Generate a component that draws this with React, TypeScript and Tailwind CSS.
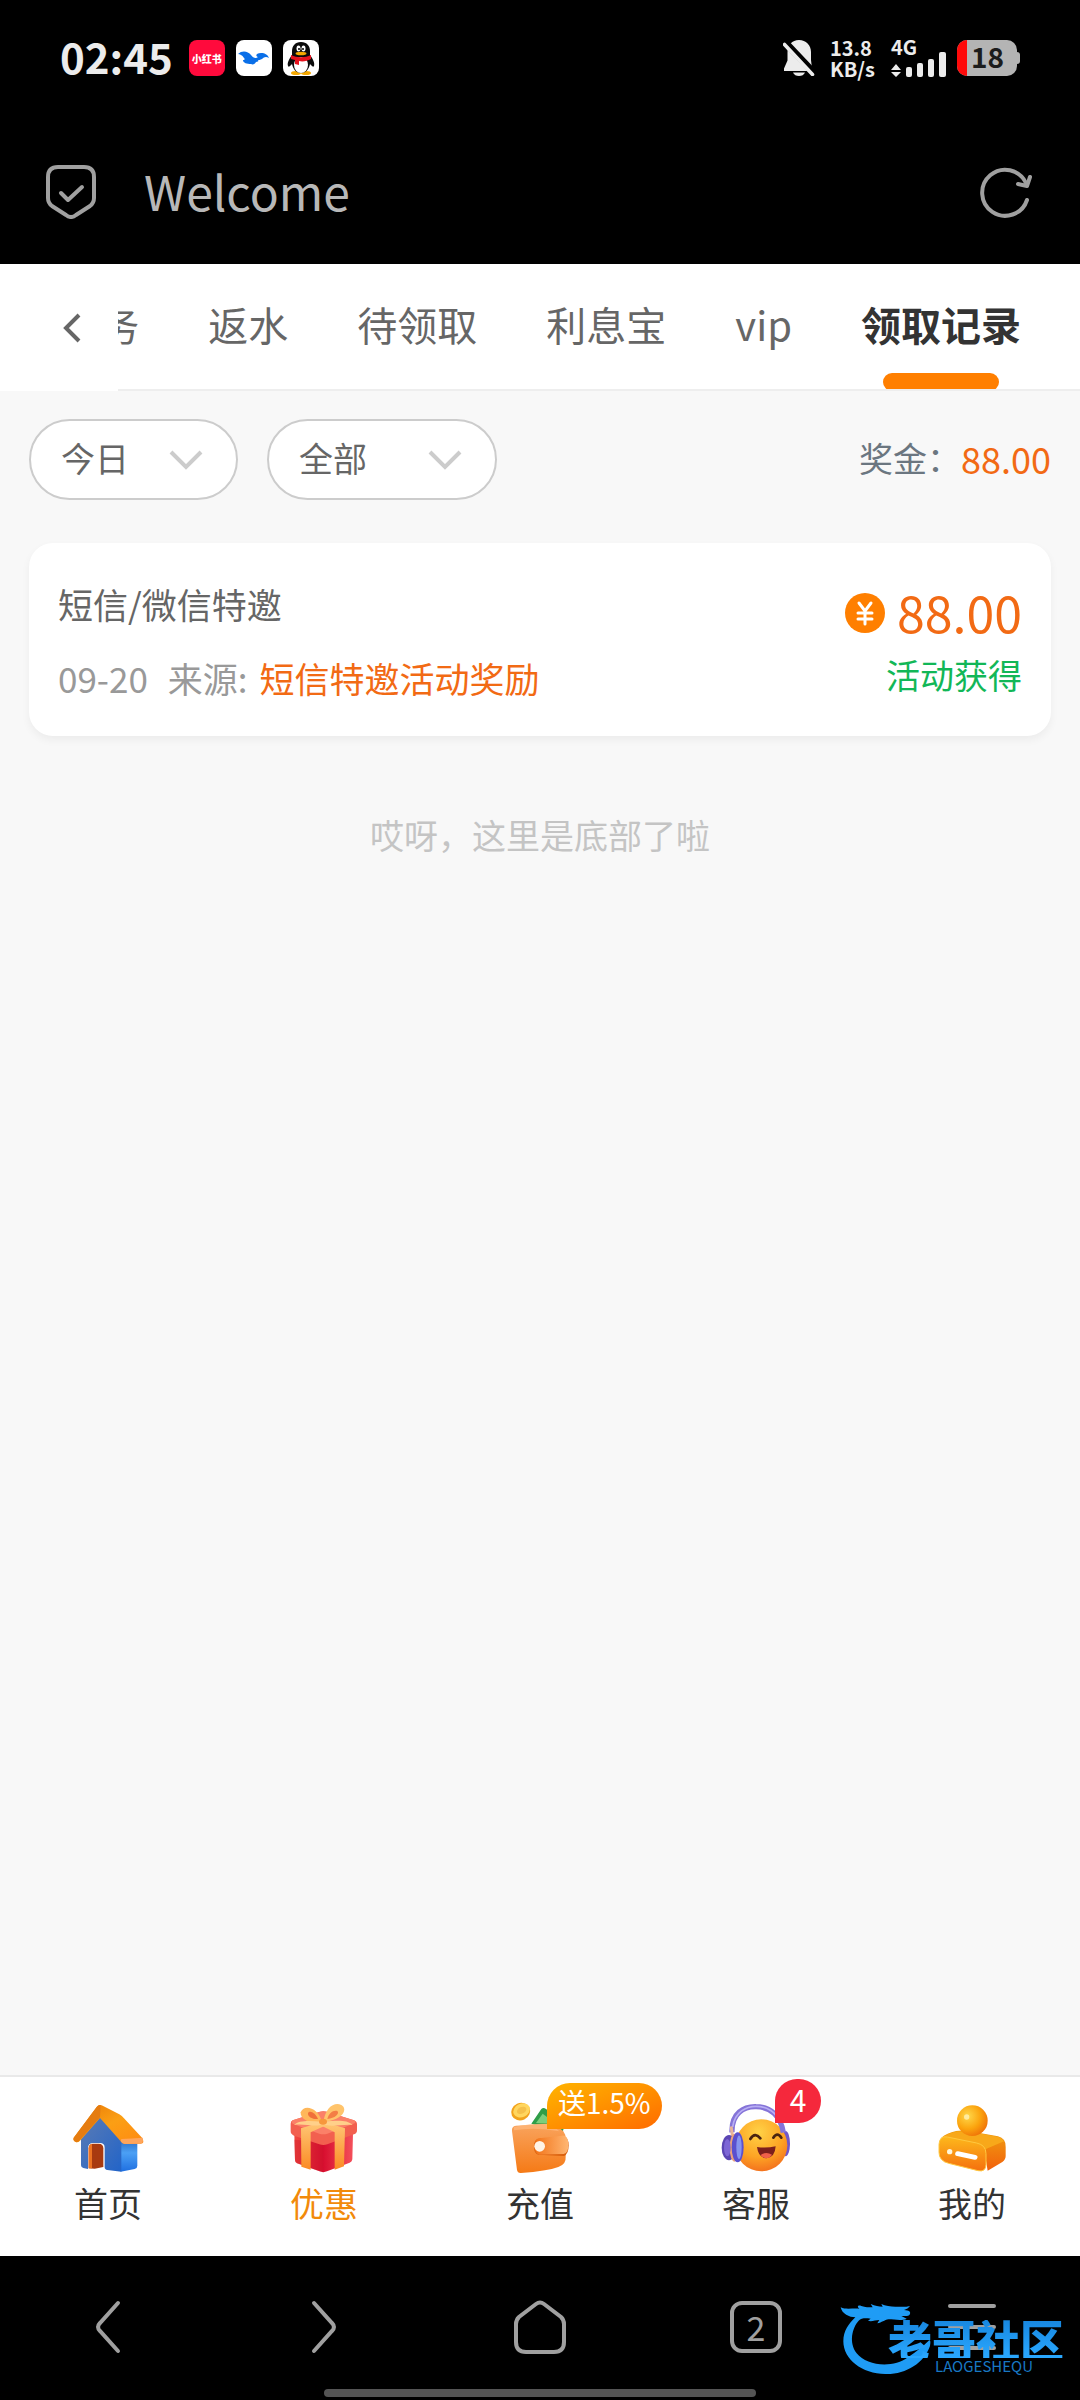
import { useState } from "react";

const tabs = ["任务", "返水", "待领取", "利息宝", "vip", "领取记录"];

// status bar icons
function BellOffIcon() {
  return (
    <svg width="32" height="36" viewBox="0 0 32 36" fill="#ececec" aria-hidden="true">
      <path d="M16 0C9 0 4.500 5 4.500 12v8.500L1 28.500V31h28v-2.500L28 20v-8C28 5 23 0 16 0z" />
      <path d="M10 32.500h12c-1 2.400-3.300 3.500-6 3.500s-5-1.100-6-3.500z" />
      <path d="M0 0 L34 36" stroke="#000" strokeWidth="7" />
      <path d="M1.500 4.500 L29.500 34.500" stroke="#ececec" strokeWidth="3.600" strokeLinecap="round" />
    </svg>
  );
}

function SignalIcon() {
  return (
    <svg width="56" height="26" viewBox="0 0 56 26" fill="#ececec" aria-hidden="true">
      <path d="M5 13l5 6H0zM5 26l-5-5h10z" />
      <rect x="15" y="16" width="6" height="10" rx="2" />
      <rect x="26" y="12" width="6" height="14" rx="2" />
      <rect x="37" y="8" width="6" height="18" rx="2" />
      <rect x="48" y="1" width="7" height="25" rx="2" />
    </svg>
  );
}

function WaveAppIcon() {
  return (
    <svg width="36" height="36" viewBox="0 0 36 36" aria-hidden="true">
      <rect width="36" height="36" rx="8" fill="#fff" />
      <path
        d="M2 14c4-4 10-3 13 1 2 3 5 4 7 2-3-1-2-4 3-4 4 0 7 2 8 5-3-2-5-1-7 1-2 1-3 1-4 1 1 1 0 2-2 2-1 2-3 3-5 2-4 0-8-1-8-4 2 0 2-1 1-2-2-3-4-4-6-4z"
        fill="#0a6fe8"
      />
    </svg>
  );
}

function PenguinAppIcon() {
  return (
    <svg width="36" height="36" viewBox="0 0 36 36" aria-hidden="true">
      <rect width="36" height="36" rx="8" fill="#fff" />
      <ellipse cx="13" cy="33" rx="5" ry="2" fill="#f5a800" />
      <ellipse cx="23" cy="33" rx="5" ry="2" fill="#f5a800" />
      <path d="M18 2c-6 0-9 4-9 9v4c-3 4-5 8-4 11 1 2 3-1 4-2 1 5 4 9 9 9s8-4 9-9c1 1 3 4 4 2 1-3-1-7-4-11v-4c0-5-3-9-9-9z" fill="#0b0b0b" />
      <ellipse cx="18" cy="25" rx="7" ry="8" fill="#fff" />
      <path d="M8 15c6 3 14 3 20 0v4c-4 2-8 3-12 2v4l-4-1v-4l-4-1z" fill="#e5121e" />
      <ellipse cx="15.500" cy="8.500" rx="2" ry="3" fill="#fff" />
      <ellipse cx="20.500" cy="8.500" rx="2" ry="3" fill="#fff" />
      <circle cx="16" cy="9" r="1" />
      <circle cx="20" cy="9" r="1" />
      <ellipse cx="18" cy="13.500" rx="5.500" ry="1.800" fill="#f5a800" />
    </svg>
  );
}

// bottom menu icons
function HomeIcon() {
  return (
    <svg width="72" height="70" viewBox="0 0 216 210" overflow="visible" aria-hidden="true">
      <defs>
        <linearGradient id="houseWall" x1="0" y1="0" x2="1" y2="1">
          <stop offset="0" stopColor="#5b7bb4" />
          <stop offset="1" stopColor="#2264c8" />
        </linearGradient>
        <linearGradient id="houseSide" x1="0" y1="0" x2="0" y2="1">
          <stop offset="0" stopColor="#2f6fc4" />
          <stop offset="0.400" stopColor="#4ba0f5" />
          <stop offset="1" stopColor="#1f6fe0" />
        </linearGradient>
        <linearGradient id="houseRoof" x1="0" y1="0" x2="1" y2="1">
          <stop offset="0" stopColor="#e87806" />
          <stop offset="0.500" stopColor="#fb9f14" />
          <stop offset="1" stopColor="#ff8a12" />
        </linearGradient>
      </defs>
      <path d="M140 112h56v76q0 8-8 10l-42 8z" fill="url(#houseSide)" />
      <path d="M27 98L84 38l64 72v96l-42-5q-8-1-8-9v-58q0-14-14-14H64q-16 0-16 16v62l-14-3q-7-1-7-8z" fill="url(#houseWall)" />
      <path d="M50 196v-60q0-14 14-14h16q14 0 14 14v56l-26 5z" fill="#a83a10" />
      <path d="M50 196v-60q0-12 10-14v74z" fill="#ec7423" />
      <path d="M5 104L74 12q8-10 18-4l50 26q8 4 14 12l54 58q10 16-4 18l-46 1q-8 0-12-6L84 45 24 113q-6 7-13 4-9-4-6-13z" fill="url(#houseRoof)" />
      <path d="M5 104L74 12q6-8 12-5l-2 36-62 70q-6 7-12 3-8-4-5-12z" fill="#e57c10" />
      <path d="M148 108q30-2 64-4 4 16-8 18l-46 1q-8 0-12-8z" fill="#ffa55c" />
    </svg>
  );
}

function GiftIcon() {
  return (
    <svg width="72" height="70" viewBox="0 0 216 210" overflow="visible" aria-hidden="true">
      <defs>
        <linearGradient id="giftBox" x1="0" y1="0" x2="1" y2="0">
          <stop offset="0" stopColor="#f04a3e" />
          <stop offset="0.500" stopColor="#d80f30" />
          <stop offset="1" stopColor="#f4505a" />
        </linearGradient>
        <linearGradient id="giftRibbon" x1="0" y1="0" x2="0" y2="1">
          <stop offset="0" stopColor="#ffc877" />
          <stop offset="1" stopColor="#fb8a24" />
        </linearGradient>
      </defs>
      <path d="M19 92l2 80q0 6 6 9l68 24q11 5 22 0l68-26q8-3 8-10l2-78z" fill="url(#giftBox)" />
      <path d="M106 118v90q-6 0-12-3l-67-24q-6-3-6-9l-2-62z" fill="#c8102c" opacity="0.350" />
      <path d="M14 52L96 26q10-3 20 0l82 26q9 3 9 12v18q0 9-9 12l-80 30q-12 4-24 0L18 98q-10-4-10-13V62q0-8 6-10z" fill="#f2604f" />
      <path d="M14 52L96 26q10-3 20 0l82 26q8 3 2 9l-82 31q-12 4-24 0L14 62q-6-5 0-10z" fill="#fb8068" />
      <path d="M39 76l65-20 12 10-48 22v112l-28-9z" fill="url(#giftRibbon)" />
      <path d="M171 76l-65-20-10 10 44 22v112l28-10z" fill="url(#giftRibbon)" />
      <path d="M102 58C70 66 36 50 38 28 46 2 92 12 102 58z" fill="#ffb75a" />
      <path d="M90 48C76 50 58 42 60 30c6-10 24 2 30 18z" fill="#f0703a" />
      <path d="M106 58C112 14 138-4 160 6c18 10 12 42-54 52z" fill="#ffc46c" />
      <path d="M118 48c4-18 18-28 30-24 8 8-8 22-30 24z" fill="#f47d45" />
      <path d="M100 56C70 54 34 50 18 66c28-6 62 8 88-2zM110 56c28-2 66-8 84 10-28-4-62 8-88-2z" fill="#ffd08a" />
      <ellipse cx="105" cy="56" rx="12" ry="9" fill="#f7973c" />
    </svg>
  );
}

function WalletIcon() {
  return (
    <svg width="72" height="70" viewBox="0 0 216 210" overflow="visible" aria-hidden="true">
      <defs>
        <linearGradient id="walletBody" x1="0" y1="0" x2="0" y2="1">
          <stop offset="0" stopColor="#f9a45e" />
          <stop offset="1" stopColor="#f57a16" />
        </linearGradient>
        <linearGradient id="walletFlap" x1="0" y1="0" x2="1" y2="0">
          <stop offset="0" stopColor="#f27318" />
          <stop offset="1" stopColor="#ffb672" />
        </linearGradient>
      </defs>
      <path d="M82 62l30-44q6-6 14 0l58 42-10 34z" fill="#2f9e48" />
      <path d="M96 60l20-28 40 30z" fill="#7ccf7c" />
      <ellipse cx="50" cy="26" rx="29" ry="26" transform="rotate(-25 50 26)" fill="#f2a31c" />
      <ellipse cx="53" cy="22" rx="26" ry="20" transform="rotate(-25 53 22)" fill="#ffd65e" />
      <ellipse cx="53" cy="22" rx="15" ry="10" transform="rotate(-25 53 22)" fill="#f5c04a" />
      <path d="M24 84q-2-14 12-16l92-6q44 4 56 34l1 66q2 22-22 30-34 12-112 18-10 1-12-9z" fill="url(#walletBody)" />
      <path d="M30 72q60-12 100-9 20 6 36 22-70-14-136-3z" fill="#ffb97e" opacity="0.700" />
      <path d="M104 107l72-6q18 0 18 26t-14 32l-76-4q-14-2-14-24t14-24z" fill="#d95f0c" />
      <path d="M106 106l68-8q18-2 19 24 1 28-14 31l-73 2q-14-2-14-25t14-24z" fill="url(#walletFlap)" />
      <circle cx="107" cy="130" r="16" fill="#fff4e6" />
    </svg>
  );
}

function ServiceIcon() {
  return (
    <svg width="72" height="70" viewBox="0 0 216 210" overflow="visible" aria-hidden="true">
      <defs>
        <radialGradient id="face" cx="0.450" cy="0.250" r="0.800">
          <stop offset="0" stopColor="#ffd246" />
          <stop offset="0.600" stopColor="#fda324" />
          <stop offset="1" stopColor="#f26a1c" />
        </radialGradient>
      </defs>
      <ellipse cx="197" cy="122" rx="13" ry="38" fill="#7058c8" />
      <circle cx="124" cy="127" r="78" fill="url(#face)" />
      <path d="M36 88C34 30 72 10 108 11c44 0 74 28 82 78" fill="none" stroke="#8574d8" strokeWidth="16" />
      <path d="M38 72C44 26 80 10 108 10c34 0 60 18 72 46" fill="none" stroke="#b8aef4" strokeWidth="5" />
      <path d="M34 74l6 48" stroke="#e7b49a" strokeWidth="9" strokeLinecap="round" />
      <ellipse cx="27" cy="134" rx="22" ry="38" fill="#5b46b4" />
      <ellipse cx="43" cy="134" rx="14" ry="42" fill="#eca27c" />
      <ellipse cx="53" cy="133" rx="18" ry="45" fill="#5a50cf" />
      <ellipse cx="57" cy="133" rx="8" ry="36" fill="#8795f0" />
      <ellipse cx="22" cy="134" rx="10" ry="26" fill="#7d66d6" />
      <path d="M91 108q14-22 30-2M160 104q12-18 24 0" fill="none" stroke="#4a2410" strokeWidth="8" strokeLinecap="round" />
      <path d="M111 132q28 4 56-2-2 34-28 36-24-2-28-34z" fill="#7c1f1c" />
      <path d="M122 156q16-12 34-1-6 10-17 11-11-1-17-10z" fill="#f0604a" />
    </svg>
  );
}

function MineIcon() {
  return (
    <svg width="72" height="70" viewBox="0 0 216 210" overflow="visible" aria-hidden="true">
      <defs>
        <radialGradient id="mineHead" cx="0.350" cy="0.350" r="0.700">
          <stop offset="0" stopColor="#ffd84a" />
          <stop offset="0.600" stopColor="#fba40e" />
          <stop offset="1" stopColor="#f07408" />
        </radialGradient>
        <linearGradient id="mineBase" x1="0" y1="0" x2="0" y2="1">
          <stop offset="0" stopColor="#fdb81c" />
          <stop offset="1" stopColor="#f5700e" />
        </linearGradient>
        <linearGradient id="mineSide" x1="0" y1="0" x2="0" y2="1">
          <stop offset="0" stopColor="#f0a010" />
          <stop offset="1" stopColor="#f2600c" />
        </linearGradient>
      </defs>
      <path d="M16 104q16-14 44-20 22-4 50 2l76 14q24 6 23 32v28q0 10-10 17l-44 26-10-60z" fill="url(#mineSide)" />
      <path d="M16 106q18-16 46-20 24-3 50 2l72 13q16 4 20 14l-56 24z" fill="#f8a81a" />
      <path d="M34 102l88 18q28 6 28 32v32q0 24-24 19l-88-22Q9 174 9 148v-24q2-27 25-22z" fill="url(#mineBase)" stroke="#ffc840" strokeWidth="3" />
      <circle cx="109" cy="53" r="46" fill="url(#mineHead)" />
      <circle cx="92" cy="42" r="8" fill="#fff3b8" opacity="0.800" />
      <circle cx="41" cy="146" r="8" fill="#fff6dc" />
      <path d="M65 152l52 11" stroke="#fff" strokeWidth="15" strokeLinecap="round" />
    </svg>
  );
}

const menus = [
  { name: "首页", icon: <HomeIcon /> },
  { name: "优惠", icon: <GiftIcon />, active: true },
  { name: "充值", icon: <WalletIcon />, promo: "送1.5%" },
  { name: "客服", icon: <ServiceIcon />, count: 4 },
  { name: "我的", icon: <MineIcon /> },
];

function Filter({ label, options, width }: { label: string; options: string[]; width: string }) {
  return (
    <div className={`grid items-center ${width}`}>
      <select
        aria-label={label}
        className="col-start-1 row-start-1 h-[81px] w-full appearance-none rounded-full border-2 border-[#cccccc] bg-white pb-1 pl-[30px] text-[34px] text-[#666666]"
      >
        {options.map((o) => (
          <option key={o}>{o}</option>
        ))}
      </select>
      <svg
        className="pointer-events-none col-start-1 row-start-1 mr-[35px] justify-self-end"
        width="34"
        height="22"
        viewBox="0 0 34 22"
        fill="none"
        stroke="#cccccc"
        strokeWidth="4"
        aria-hidden="true"
      >
        <path d="M2 3l15 15L32 3" />
      </svg>
    </div>
  );
}

export default function App() {
  const [tab, setTab] = useState("领取记录");

  return (
    // main container
    <div className="flex min-h-screen w-full flex-col bg-[#f8f8f8] font-['Noto_Sans_CJK_SC',sans-serif]">
      <header className="bg-black">
        {/* status bar */}
        <div className="flex h-[116px] items-center justify-between pr-[60px] pl-[60px]">
          <div className="flex items-center">
            <span className="mr-4 pb-1 text-[42px] leading-[42px] font-bold text-[#ececec]">02:45</span>
            <div className="flex gap-[11px]">
              <div className="flex size-9 items-center justify-center rounded-lg bg-[#ff0a3c] text-[10px] font-black text-white">
                小红书
              </div>
              <WaveAppIcon />
              <PenguinAppIcon />
            </div>
          </div>

          <div className="flex items-center text-[#ececec]">
            <BellOffIcon />
            <div className="ml-[15px] flex flex-col text-[20px] leading-[21px] font-bold">
              <span>13.8</span>
              <span>KB/s</span>
            </div>
            <div className="ml-4 flex flex-col">
              <span className="h-[11px] text-[20px] leading-[14px] font-bold">4G</span>
              <SignalIcon />
            </div>
            {/* battery */}
            <div className="ml-[10px] flex items-center">
              <div className="flex h-9 w-[60px] items-center rounded-[10px] bg-[#b4b4b4]">
                <div className="h-full w-[10px] rounded-l-[10px] bg-[#ff0a0a]" />
                <span className="ml-1 pb-1 text-[28px] leading-[28px] font-bold text-[#1c1c1c]">18</span>
              </div>
              <div className="h-3 w-[3px] rounded-r-sm bg-[#b4b4b4]" />
            </div>
          </div>
        </div>

        {/* browser title */}
        <div className="flex h-[148px] items-center pt-1 pr-[48px] pl-[46px]">
          <svg width="50" height="54" viewBox="0 0 50 54" fill="none" stroke="#a0a0a0" strokeWidth="4" strokeLinecap="round" strokeLinejoin="round" aria-hidden="true">
            <path d="M12 2h26q10 0 10 10v21q0 5-4 8L30 50q-5 4-10 0L6 41q-4-3-4-8V12Q2 2 12 2z" />
            <path d="M15 28l7 7 14-13" />
          </svg>
          <h1 className="ml-12 flex-1 pb-1 text-[48px] leading-[56px] font-normal text-[#b8b8b8]">Welcome</h1>
          <button type="button" aria-label="刷新">
            <svg width="52" height="52" viewBox="0 0 52 52" fill="none" stroke="#a0a0a0" strokeWidth="4" strokeLinecap="round" strokeLinejoin="round" aria-hidden="true">
              <path d="M47 34A23 23 0 1 1 46 17" />
              <path d="M38 18l9 2 3-9" />
            </svg>
          </button>
        </div>
      </header>

      {/* tabs */}
      <nav className="flex h-[127px] bg-white">
        <button type="button" aria-label="返回" className="flex w-[118px] shrink-0 items-center pl-[62px]">
          <svg width="20" height="30" viewBox="0 0 20 30" fill="none" stroke="#666666" strokeWidth="4" aria-hidden="true">
            <path d="M17 2L4 15l13 13" />
          </svg>
        </button>
        <div className="flex min-w-0 flex-1 justify-end gap-[69px] overflow-hidden border-b-2 border-[#eeeeee] pr-[59px]">
          {tabs.map((name) => (
            <button
              key={name}
              type="button"
              onClick={() => setTab(name)}
              className={
                name === tab
                  ? "relative -mb-0.5 shrink-0 pb-2 text-[40px] font-bold text-[#333333]"
                  : "-mb-0.5 shrink-0 pb-2 text-[40px] text-[#666666]"
              }
            >
              {name}
              {name === tab && (
                <span className="absolute inset-x-[22px] bottom-0 h-[18px] rounded-full bg-[#ff7f00]" />
              )}
            </button>
          ))}
        </div>
      </nav>

      <main className="flex-1 px-[29px] pt-7">
        {/* filters */}
        <div className="flex items-center">
          <Filter label="日期" options={["今日", "昨日", "近7日"]} width="mr-[29px] w-[209px]" />
          <Filter label="类型" options={["全部", "活动", "返水"]} width="w-[230px]" />
          <div className="ml-auto flex items-center pb-1 text-[34px] leading-[50px] text-[#6b7680]">
            奖金：<span className="text-[36px] text-[#f26a14]">88.00</span>
          </div>
        </div>

        {/* record */}
        <section className="mt-[43px] flex h-[193px] justify-between rounded-3xl bg-white px-[29px] shadow-[0_4px_8px_rgba(0,0,0,0.05)]">
          <div className="flex flex-col pt-9 text-[35px] leading-[50px]">
            <h2 className="text-[#666666]">短信/微信特邀</h2>
            <p className="mt-6 flex text-[#999999]">
              <span className="mr-5">09-20</span>
              <span className="mr-3">来源:</span>
              <span className="text-[#f26a14]">短信特邀活动奖励</span>
            </p>
          </div>
          <div className="flex flex-col items-end pt-[41px]">
            <div className="flex items-center gap-3">
              <svg width="40" height="40" viewBox="0 0 40 40" aria-hidden="true">
                <circle cx="20" cy="20" r="20" fill="#ff7f00" />
                <path d="M14 10l6 8 6-8M20 18v13M13 20h14M13 26h14" fill="none" stroke="#fff" strokeWidth="3" strokeLinecap="round" />
              </svg>
              <strong className="pb-1 text-[50px] leading-[54px] font-normal text-[#f26a14]">88.00</strong>
            </div>
            <span className="mt-2 text-[34px] leading-[50px] text-[#12b757]">活动获得</span>
          </div>
        </section>

        <p className="mt-[74px] text-center text-[34px] leading-[50px] text-[#c4c4c4]">哎呀，这里是底部了啦</p>
      </main>

      {/* bottom menu */}
      <nav className="grid h-[181px] grid-cols-5 border-t-2 border-[#e9e9e9] bg-white">
        {menus.map((m) => (
          <a key={m.name} href="#" className="flex flex-col items-center gap-1.5 pt-[26px]">
            <div className="relative">
              {m.icon}
              {m.promo && (
                <span className="absolute -top-5 left-[43px] flex h-[46px] items-center rounded-full rounded-bl-none bg-linear-to-br from-[#ffb400] to-[#ff6a00] px-[11px] pb-2 text-[28px] leading-[28px] whitespace-nowrap text-white">
                  {m.promo}
                </span>
              )}
              {m.count && (
                <span className="absolute -top-6 left-[55px] flex h-11 w-[46px] items-center justify-center rounded-full rounded-bl-none bg-[#f5283c] pb-1 text-[30px] leading-[30px] text-white">
                  {m.count}
                </span>
              )}
            </div>
            <span className={m.active ? "text-[34px] leading-[48px] text-[#f28a0a]" : "text-[34px] leading-[48px] text-[#333333]"}>
              {m.name}
            </span>
          </a>
        ))}
      </nav>

      {/* browser toolbar */}
      <footer className="relative flex h-36 flex-col bg-black">
        <div className="grid flex-1 grid-cols-5 items-center justify-items-center pt-2">
          <button type="button" aria-label="后退">
            <svg width="26" height="54" viewBox="0 0 26 54" fill="none" stroke="#a0a0a0" strokeWidth="4" strokeLinecap="round" aria-hidden="true">
              <path d="M23 3L5 23q-4 4 0 8l18 20" />
            </svg>
          </button>
          <button type="button" aria-label="前进">
            <svg width="26" height="54" viewBox="0 0 26 54" fill="none" stroke="#a0a0a0" strokeWidth="4" strokeLinecap="round" aria-hidden="true">
              <path d="M3 3l18 20q4 4 0 8L3 51" />
            </svg>
          </button>
          <button type="button" aria-label="主页">
            <svg width="52" height="54" viewBox="0 0 52 54" fill="none" stroke="#a0a0a0" strokeWidth="4" aria-hidden="true">
              <path d="M22 4q4-3 8 0l17 13q3 3 3 7v18q0 10-10 10H12Q2 52 2 42V24q0-4 3-7z" />
            </svg>
          </button>
          <button type="button" aria-label="标签页" className="size-[52px] rounded-xl border-4 border-[#a0a0a0] text-[34px] leading-[40px] text-[#a0a0a0]">
            2
          </button>
          <button type="button" aria-label="菜单">
            <svg width="48" height="46" viewBox="0 0 48 46" stroke="#a0a0a0" strokeWidth="4" strokeLinecap="round" aria-hidden="true">
              <path d="M2 2h44M2 23h44M2 44h44" />
            </svg>
          </button>
        </div>
        <div className="mb-[3px] h-2 w-2/5 self-center rounded-full bg-[#545454]" />

        {/* watermark */}
        <div className="absolute right-4 bottom-[24px] flex">
          <svg className="-mr-[44px]" width="92" height="76" viewBox="0 0 276 228" fill="#1f9cf5" aria-hidden="true">
            <path d="M2 22c16 8 36 2 56 4-8-6-4-12 6-8 12 4 22 4 34 4l-6-10c14 6 24 8 36 8l-4-8c12 6 28 8 42 8 14 0 30 2 44-2-4 6-10 10-18 12 16 2 20 4 18 12-2 8-16 6-26 6l16 8c-14 8-38 2-54 2-14 2-20 10-34 12l6-10c-12 0-24 6-34 2l8-6c-16-2-28-2-36 6C36 84 26 128 50 160c30 38 108 46 154 12 26-18 46-34 62-50 6-4 6 6 4 16-18 52-74 86-134 84C66 222 10 178 10 124c0-32 16-52 36-72-18 0-40-10-44-30z" />
          </svg>
          <div className="flex flex-col items-center pt-5">
            <span className="bg-linear-to-b from-[#1787e0] to-[#2aa8ff] bg-clip-text text-[44px] leading-[38px] font-black text-transparent">
              老哥社区
            </span>
            <span className="pl-4 text-[15px] leading-4 text-[#1878c4]">LAOGESHEQU</span>
          </div>
        </div>
      </footer>
    </div>
  );
}
